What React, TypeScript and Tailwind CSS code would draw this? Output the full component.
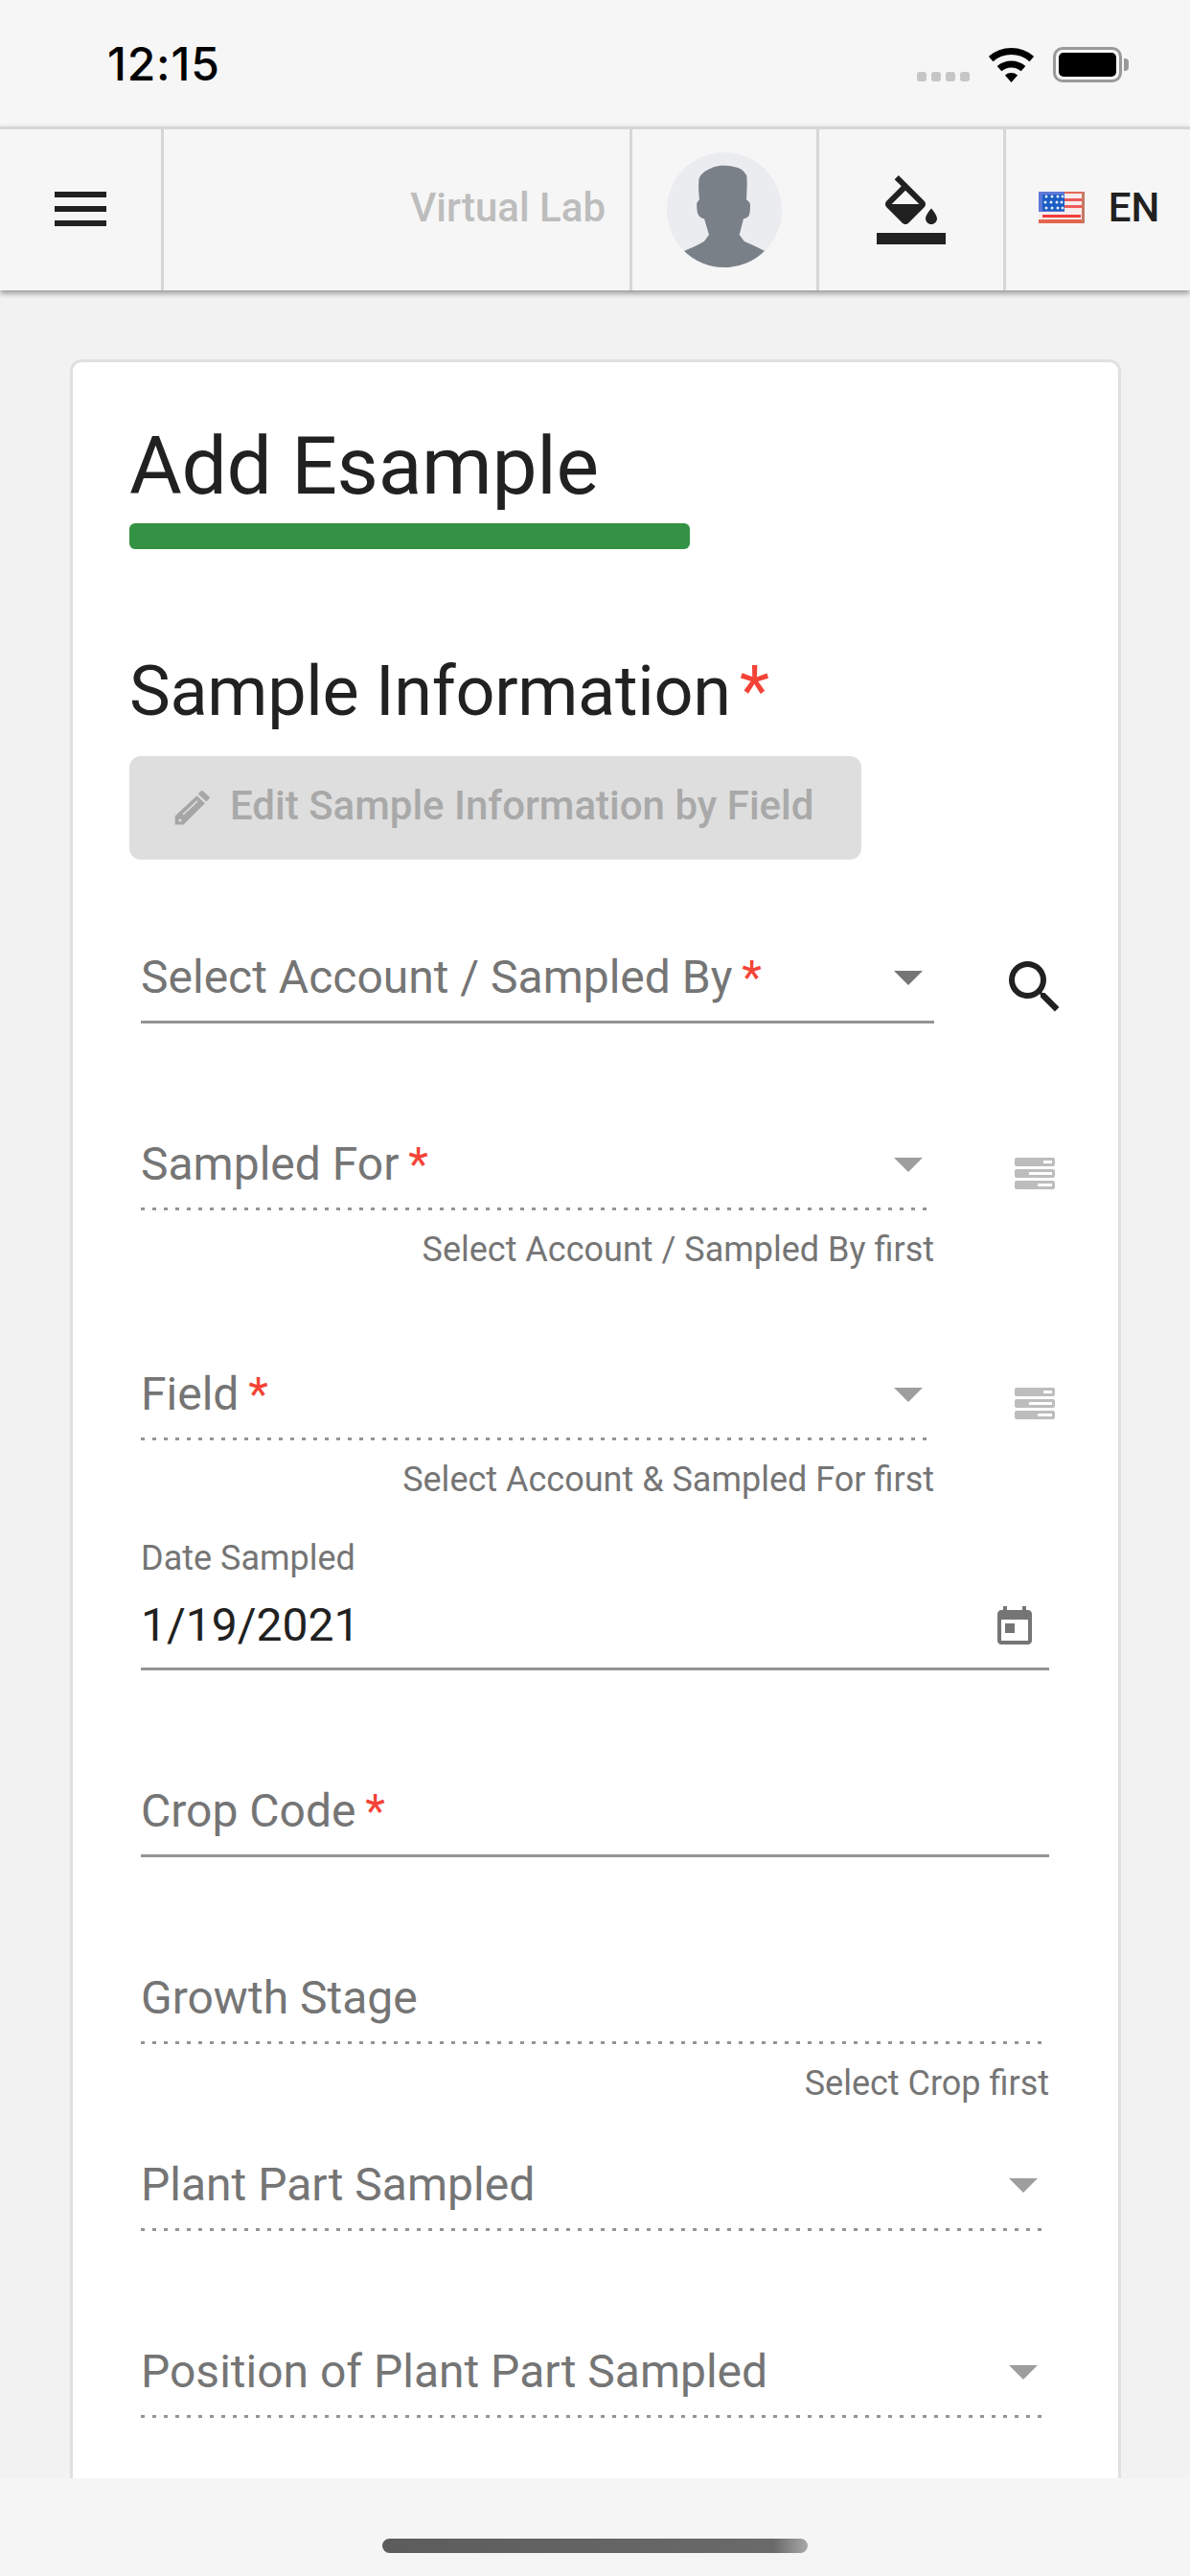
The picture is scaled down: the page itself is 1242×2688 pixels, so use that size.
import { ReactNode } from 'react';

const MenuIcon = () => (
  <svg viewBox="0 0 24 24" className="w-[72px] h-[72px] fill-[#212121]">
    <path d="M3 18h18v-2H3v2zm0-5h18v-2H3v2zm0-7v2h18V6H3z" />
  </svg>
);

const PaintIcon = () => (
  <svg viewBox="0 0 24 24" className="w-[72px] h-[72px] fill-[#212121]">
    <path d="M16.56 8.94L7.62 0 6.21 1.41l2.38 2.38-5.15 5.15c-.59.59-.59 1.54 0 2.12l5.5 5.5c.29.29.68.44 1.06.44s.77-.15 1.06-.44l5.5-5.5c.59-.58.59-1.53 0-2.12zM5.21 10L10 5.21 14.79 10H5.21zM19 11.5s-2 2.17-2 3.5c0 1.1.9 2 2 2s2-.9 2-2c0-1.33-2-3.5-2-3.5z" />
    <path d="M0 20h24v4H0z" />
  </svg>
);

const Avatar = () => (
  <svg viewBox="0 0 120 120" className="w-[120px] h-[120px]">
    <defs>
      <clipPath id="avatarClip">
        <circle cx="60" cy="60" r="60" />
      </clipPath>
    </defs>
    <circle cx="60" cy="60" r="60" fill="#eaecef" />
    <path
      clipPath="url(#avatarClip)"
      fill="#7a8088"
      d="M60 13.7C52 13.5 46 16 40.7 19.3C35 23 33 27 33.3 31C32.8 38 33.5 44 34 49L31.3 52.7C31 58 31.5 63 33.3 66C35 68 37 69 39 69.3L44 86L39 92.7C32 97 25 100 18.3 102.7L10 125H110L101.7 102.7C95 99 88 96 80.7 92.7L75.7 86L80 69.3C82 69 84.5 68 85.7 66C87 62 87.2 57 86.7 52.7L83 49C83.5 40 84 32 83.3 24.3C81 20 78 17.5 74 16C69 14.5 65 13.8 60 13.7Z"
    />
  </svg>
);

const Flag = () => (
  <svg viewBox="0 0 48 33" className="w-[48px] h-[33px] blur-[0.7px]">
    <rect width="48" height="33" fill="#f6ecec" />
    <rect width="48" height="2" fill="#e46a55" />
    <rect x="27" y="7" width="18" height="3" fill="#ee5a5a" />
    <rect x="27" y="14" width="18" height="3" fill="#f25a5a" />
    <rect x="4" y="24" width="40" height="3" fill="#f23c3c" />
    <rect y="29" width="48" height="4" fill="#e2664f" />
    <rect x="45" width="3" height="33" fill="#c47a64" />
    <rect width="27" height="21" fill="#5f78d8" />
    <rect x="4" y="3" width="23" height="17" fill="#1a5cc4" />
    {[5, 11, 17].map(y =>
      [8, 14, 20, 25].map(x => <circle key={`${x}-${y}`} cx={y === 11 ? x - 1 : x} cy={y} r="1.5" fill="#e8eefc" />)
    )}
  </svg>
);

const Wifi = () => (
  <svg viewBox="0 0 47 36" className="w-[47px] h-[36px]">
    <path d="M2.2 11.5A32.5 32.5 0 0 1 44.8 11.5" fill="none" stroke="#000" strokeWidth="7" />
    <path d="M11 21.7A19 19 0 0 1 36 21.7" fill="none" stroke="#000" strokeWidth="7" />
    <path d="M23.5 36L16.9 28.5A10 10 0 0 1 30.1 28.5Z" fill="#000" />
  </svg>
);

// pencil with cap band and hollow tip, traced from the button
const PencilIcon = () => (
  <svg viewBox="0 0 60 56" className="w-[60px] h-[56px] shrink-0">
    <path d="M39.5 10.5Q40.7 9.3 42 10.5L48.2 16.3Q49.4 17.5 48.2 18.8L45.3 21.6L36.8 13.6Z" fill="#a6a6a6" />
    <path d="M35.4 15.2L43.9 23.2L21.5 45.6H12.7V36.6Z" fill="#a6a6a6" />
    <path d="M21 35L36 20.8" stroke="#dedede" strokeWidth="1.6" fill="none" />
    <circle cx="18" cy="41" r="1.6" fill="#dedede" />
  </svg>
);

const SearchIcon = () => (
  <svg viewBox="0 0 24 24" className="w-[72px] h-[72px] fill-[#212121]">
    <path d="M15.5 14h-.79l-.28-.27C15.41 12.59 16 11.11 16 9.5 16 5.91 13.09 3 9.5 3S3 5.91 3 9.5 5.91 16 9.5 16c1.61 0 3.09-.59 4.23-1.57l.27.28v.79l5 4.99L20.49 19l-4.99-5zm-6 0C7.01 14 5 11.99 5 9.5S7.01 5 9.5 5 14 7.01 14 9.5 11.99 14 9.5 14z" />
  </svg>
);

const StorageIcon = () => (
  <svg viewBox="0 0 72 72" className="w-[72px] h-[72px]">
    <rect x="15" y="19" width="42" height="9" rx="2" fill="#bdbdbd" />
    <rect x="45" y="22" width="9" height="3" fill="#fff" />
    <rect x="15" y="31" width="42" height="9" rx="2" fill="#bdbdbd" />
    <rect x="30" y="34" width="24" height="3" fill="#fff" />
    <rect x="15" y="43" width="42" height="9" rx="2" fill="#bdbdbd" />
    <rect x="39" y="46" width="15" height="3" fill="#fff" />
  </svg>
);

const CalendarIcon = () => (
  <svg viewBox="0 0 24 24" className="w-[48px] h-[48px] fill-[#757575]">
    <path d="M19 3h-1V1h-2v2H8V1H6v2H5c-1.11 0-1.99.9-1.99 2L3 19c0 1.1.89 2 2 2h14c1.1 0 2-.9 2-2V5c0-1.1-.9-2-2-2zm0 16H5V8h14v11zM7 10h5v5H7z" />
  </svg>
);

const Caret = ({ disabled }: { disabled?: boolean }) => (
  <svg viewBox="0 0 30 15" className={`w-[30px] h-[15px] ml-auto mr-[12px] mt-[21px] shrink-0 ${disabled ? 'fill-[#9e9e9e]' : 'fill-[#757575]'}`}>
    <path d="M0 0h30L15 15z" />
  </svg>
);

const Required = () => <span className="text-[#f44336]">{'\u2009*'}</span>;

const Field = ({
  label,
  required,
  dotted,
  caret,
  width,
  helper,
  className = '',
}: {
  label: string;
  required?: boolean;
  dotted?: boolean;
  caret?: boolean;
  width: string;
  helper?: string;
  className?: string;
}) => (
  <div className={`${width} ${className}`}>
    <div
      className={`flex items-start h-[76px] text-[48px] leading-[56px] text-[#757575] ${
        dotted
          ? 'bg-[linear-gradient(to_right,#949494_33%,transparent_0)] bg-[length:12px_3px] bg-bottom bg-repeat-x'
          : 'border-b-[3px] border-[#949494]'
      }`}
    >
      <span>
        {label}
        {required && <Required />}
      </span>
      {caret && <Caret disabled={dotted} />}
    </div>
    {helper && <p className="mt-[20px] text-right text-[36px] leading-[42px] text-[#757575]">{helper}</p>}
  </div>
);

const SideRow = ({ icon, className = '', children }: { icon: ReactNode; className?: string; children: ReactNode }) => (
  <div className={`flex items-start ${className}`}>
    {children}
    <div className="ml-[69px] mt-[2px] shrink-0">{icon}</div>
  </div>
);

const NavCell = ({ children }: { children: ReactNode }) => (
  <div className="w-[195px] shrink-0 border-l-[3px] border-[#d6d6d6] flex items-center justify-center">{children}</div>
);

export default function App() {
  return (
    <div className="w-[1242px] h-[2688px] flex flex-col overflow-hidden bg-[#f2f2f2] font-['Roboto',sans-serif]">
      <header className="h-[132px] shrink-0 bg-[#f6f6f6] flex items-start pl-[112px] pr-[64px]">
        <span className="mt-[38px] text-[48px] leading-[58px] font-medium text-black font-['Inter',sans-serif] tracking-[0.8px]">12:15</span>
        <div className="ml-auto flex items-end gap-[20px] mt-[49px]">
          <div className="flex gap-[5px] mb-[1px]">
            <span className="w-[10px] h-[10px] rounded-[3px] bg-[#c6c6c6]" />
            <span className="w-[10px] h-[10px] rounded-[3px] bg-[#c6c6c6]" />
            <span className="w-[10px] h-[10px] rounded-[3px] bg-[#c6c6c6]" />
            <span className="w-[10px] h-[10px] rounded-[3px] bg-[#c6c6c6]" />
          </div>
          <Wifi />
          <div className="flex items-center">
            <div className="w-[72px] h-[37px] rounded-[10px] border-[3px] border-[#999] p-[3px]">
              <div className="w-full h-full rounded-[5px] bg-black" />
            </div>
            <div className="w-[5px] h-[13px] ml-[2px] rounded-r-[4px] bg-[#999]" />
          </div>
        </div>
      </header>

      <nav className="h-[171px] shrink-0 relative z-10 flex bg-[#f6f6f6] border-t-[3px] border-[#d6d6d6] shadow-[0_3px_6px_rgba(0,0,0,0.4)]">
        <div className="w-[168px] shrink-0 flex items-center justify-center pb-[3px]">
          <MenuIcon />
        </div>
        <div className="flex-1 border-l-[3px] border-[#d6d6d6] flex items-center justify-end pr-[25px] pb-[6px] text-[42px] font-medium text-[#bdbdbd]">
          Virtual Lab
        </div>
        <NavCell>
          <Avatar />
        </NavCell>
        <NavCell>
          <PaintIcon />
        </NavCell>
        <NavCell>
          <div className="flex items-center gap-[25px] pb-[6px] pl-[2px] text-[42px] font-medium text-[#212121]">
            <Flag />
            <span>EN</span>
          </div>
        </NavCell>
      </nav>

      <main className="flex-1 min-h-0 overflow-hidden pl-[73px] pr-[72px] pt-[72px]">
        <section className="bg-white border-[3px] border-[#e0e0e0] rounded-[12px] pl-[59px] pt-[59px] h-[2400px]">
          <h1 className="text-[84px] leading-[100px] font-normal text-[#212121] tracking-[-0.3px]">Add Esample</h1>
          <div className="mt-[9px] w-[585px] h-[27px] rounded-[6px] bg-[#349244]" />
          <h2 className="mt-[106px] text-[72px] leading-[86px] font-normal text-[#212121] tracking-[-0.3px]">
            Sample Information
            <span className="ml-[-5px] text-[#f44336]">{'\u2009*'}</span>
          </h2>
          <button className="mt-[24px] w-[764px] h-[108px] rounded-[12px] bg-[#dedede] flex items-center pl-[35px] gap-[10px] text-[42px] font-medium text-[#a9a9a9]">
            <PencilIcon />
            <span className="pb-[5px]">Edit Sample Information by Field</span>
          </button>

          <div className="ml-[12px] mt-[95px]">
            <SideRow icon={<SearchIcon />}>
              <Field width="w-[828px]" label="Select Account / Sampled By" required caret />
            </SideRow>
            <SideRow icon={<StorageIcon />} className="mt-[119px]">
              <Field width="w-[828px]" label="Sampled For" required dotted caret helper="Select Account / Sampled By first" />
            </SideRow>
            <SideRow icon={<StorageIcon />} className="mt-[102px]">
              <Field width="w-[828px]" label="Field" required dotted caret helper="Select Account & Sampled For first" />
            </SideRow>

            <div className="mt-[40px] w-[948px]">
              <p className="text-[36px] leading-[42px] text-[#757575]">Date Sampled</p>
              <div className="h-[96px] pt-[4px] flex items-center border-b-[3px] border-[#949494] text-[48px] leading-[56px] text-[#212121]">
                <span>1/19/2021</span>
                <div className="ml-auto mr-[12px] mt-[5px]">
                  <CalendarIcon />
                </div>
              </div>
            </div>

            <Field width="w-[948px]" className="mt-[119px]" label="Crop Code" required />
            <Field width="w-[948px]" className="mt-[119px]" label="Growth Stage" dotted helper="Select Crop first" />
            <Field width="w-[948px]" className="mt-[57px]" label="Plant Part Sampled" dotted caret />
            <Field width="w-[948px]" className="mt-[119px]" label="Position of Plant Part Sampled" dotted caret />
          </div>
        </section>
      </main>

      <footer className="h-[102px] shrink-0 bg-[#f5f5f5] flex justify-center pt-[63px]">
        <div className="w-[444px] h-[15px] rounded-[8px] bg-[linear-gradient(90deg,#5c5c5c_0%,#6a6a6a_92%,#a8a8a8_100%)]" />
      </footer>
    </div>
  );
}
